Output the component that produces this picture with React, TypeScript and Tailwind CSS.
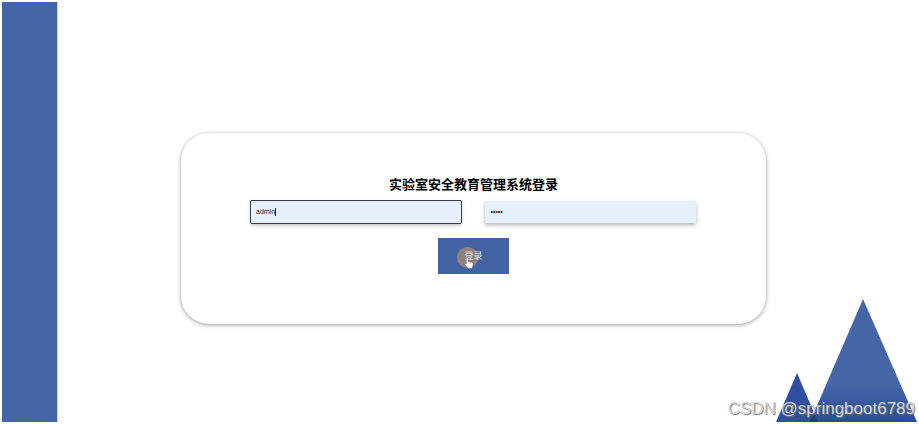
import { useState, type FormEvent } from "react";

const fieldClass =
  "h-[22px] w-full rounded-[1px] bg-[#e6effc] px-[5px] font-['Liberation_Sans',Arial,sans-serif] text-[7px] text-[#20242c] shadow-[0_2px_4px_rgba(0,0,0,0.3)] outline-none";

function Mountains() {
  return (
    <svg
      className="absolute right-0.5 bottom-0.5 h-[124px] w-[142px]"
      viewBox="0 0 142 124"
      aria-hidden="true"
    >
      <defs>
        <linearGradient id="peak" x1="0" y1="0" x2="0" y2="124" gradientUnits="userSpaceOnUse">
          <stop offset="0.7" stopColor="#4465a6" />
          <stop offset="1" stopColor="#2b4c98" />
        </linearGradient>
      </defs>
      <path d="M22 75 L43 124 H1 Z" fill="#2f50a0" />
      <path d="M88 1 L142 124 H35 Z" fill="url(#peak)" />
      <path d="M38 113 L43 124 H34 Z" fill="#203f85" />
    </svg>
  );
}

function Pointer() {
  return (
    <svg
      className="pointer-events-none absolute top-[19px] left-[26px] h-3 w-[10px]"
      viewBox="0 0 10 12"
      aria-hidden="true"
    >
      <path
        d="M2.3 1.2c0-1.1 1.7-1.1 1.7 0v3.2l4.1.8c.8.2 1.2.7 1.1 1.5L8.7 9.3 8 11.5H4L1.1 8C.4 7 1.3 6.3 2.3 7z"
        fill="#fff"
        stroke="#555b6d"
        strokeWidth="0.5"
      />
      <path d="M5 5v2M6.6 5.3V7" stroke="#aaa" strokeWidth="0.4" />
    </svg>
  );
}

export default function App() {
  const [username, setUsername] = useState("admin");
  const [password, setPassword] = useState("admin");

  const handleSubmit = (e: FormEvent) => {
    e.preventDefault();
  };

  return (
    <div className="relative flex h-screen overflow-hidden bg-white p-0.5 font-['Liberation_Sans','Noto_Sans_CJK_SC',sans-serif]">
      <aside className="w-14 shrink-0 border-r border-[#c9cce4] bg-[#4465a5]" />

      <main className="flex flex-1 items-center justify-center pt-8 pr-7">
        <form
          onSubmit={handleSubmit}
          className="flex w-[70.4%] max-w-3xl flex-col items-center rounded-[28px] bg-white px-[70px] pt-[42px] pb-[50px] shadow-[0_1px_4px_rgba(0,0,0,0.4)]"
        >
          <h1 className="text-[13px] leading-5 font-bold text-black">实验室安全教育管理系统登录</h1>

          <div className="mt-1.5 grid w-full grid-cols-2 gap-6">
            <label className="relative flex">
              <input
                type="text"
                aria-label="用户名"
                value={username}
                onChange={(e) => setUsername(e.target.value)}
                className={`${fieldClass} caret-transparent ring-1 ring-[#3a3e48]`}
              />
              <span className="absolute top-[7px] left-6 h-2 w-px bg-[#20242c]" />
            </label>
            <label className="flex">
              <input
                type="password"
                aria-label="密码"
                value={password}
                onChange={(e) => setPassword(e.target.value)}
                className={fieldClass}
              />
            </label>
          </div>

          <button
            type="submit"
            className="relative isolate mt-[15px] h-9 w-[71px] bg-[#4262a4] pt-0.5 text-[9px] text-[#e3e8f3]"
          >
            <span className="absolute top-[9px] left-[19px] -z-10 size-[21px] rounded-full bg-[#a58c72]/80" />
            登录
            <Pointer />
          </button>
        </form>
      </main>

      <Mountains />
      <p className="absolute right-1 bottom-[5px] font-['Liberation_Sans',Arial,sans-serif] text-[17px] leading-5 text-[#d4d7de] [text-shadow:1px_1px_1px_#777]">
        CSDN @springboot6789
      </p>
    </div>
  );
}
